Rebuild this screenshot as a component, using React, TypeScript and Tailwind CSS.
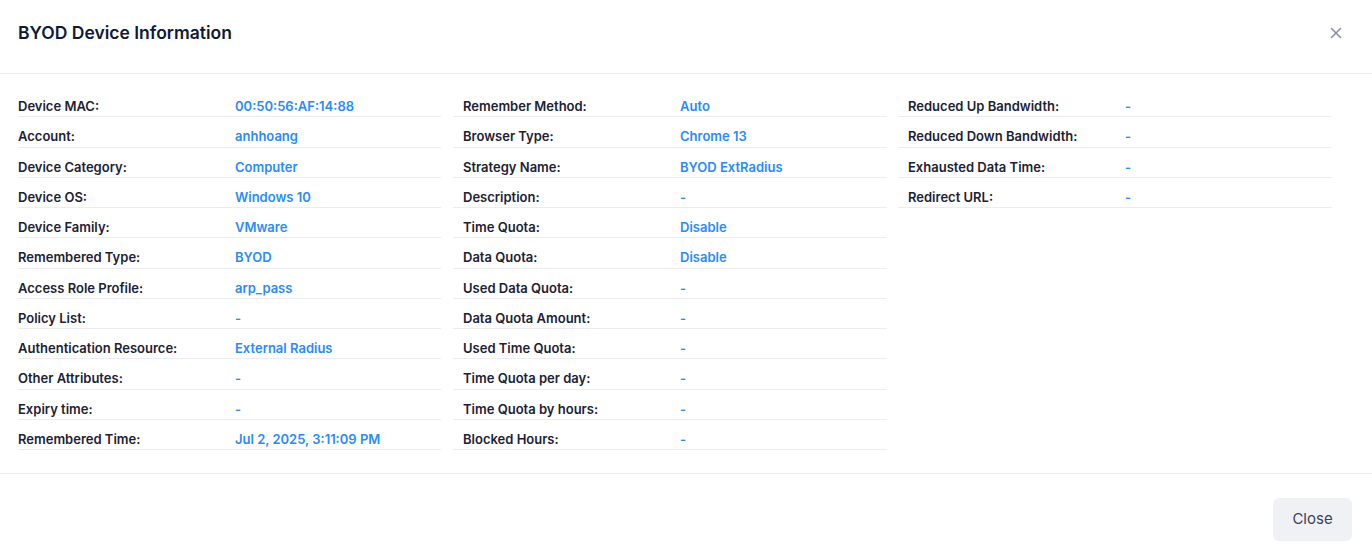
import React from "react";

type Item = [string, string];

const col1: Item[] = [
  ["Device MAC:", "00:50:56:AF:14:88"],
  ["Account:", "anhhoang"],
  ["Device Category:", "Computer"],
  ["Device OS:", "Windows 10"],
  ["Device Family:", "VMware"],
  ["Remembered Type:", "BYOD"],
  ["Access Role Profile:", "arp_pass"],
  ["Policy List:", "-"],
  ["Authentication Resource:", "External Radius"],
  ["Other Attributes:", "-"],
  ["Expiry time:", "-"],
  ["Remembered Time:", "Jul 2, 2025, 3:11:09 PM"],
];

const col2: Item[] = [
  ["Remember Method:", "Auto"],
  ["Browser Type:", "Chrome 13"],
  ["Strategy Name:", "BYOD ExtRadius"],
  ["Description:", "-"],
  ["Time Quota:", "Disable"],
  ["Data Quota:", "Disable"],
  ["Used Data Quota:", "-"],
  ["Data Quota Amount:", "-"],
  ["Used Time Quota:", "-"],
  ["Time Quota per day:", "-"],
  ["Time Quota by hours:", "-"],
  ["Blocked Hours:", "-"],
];

const col3: Item[] = [
  ["Reduced Up Bandwidth:", "-"],
  ["Reduced Down Bandwidth:", "-"],
  ["Exhausted Data Time:", "-"],
  ["Redirect URL:", "-"],
];

function Column({ items, width, pad }: { items: Item[]; width: string; pad: boolean }) {
  return (
    <div className={`${width} flex flex-col`}>
      {items.map(([k, v]) => (
        <div
          key={k}
          className={`h-[30.25px] box-border pt-[10px] border-b border-[#ededf1] flex text-[13px] leading-[18px] font-semibold ${pad ? "pl-[10px]" : ""}`}
        >
          <div className="w-[217px] shrink-0 text-[#1c2233]">{k}</div>
          <div className="text-[#2a8bfb]">{v}</div>
        </div>
      ))}
    </div>
  );
}

export default function App() {
  return (
    <div
      className="w-[1372px] h-[560px] bg-white flex flex-col"
      style={{ fontFamily: "Inter, 'Noto Sans', sans-serif" }}
    >
      <div className="h-[74px] border-b border-[#ececf0] flex items-center justify-between pl-[18px] pr-[30px] shrink-0">
        <h1 className="text-[17.5px] font-semibold text-[#0f1a33] leading-[24px] -mt-[8px]">
          BYOD Device Information
        </h1>
        <svg width="12" height="12" viewBox="0 0 12 12" className="-mt-[8px]">
          <path d="M1.5 1.5 L10.5 10.5 M10.5 1.5 L1.5 10.5" stroke="#868ca6" strokeWidth="1.5" strokeLinecap="round" />
        </svg>
      </div>
      <div className="pl-[18px] pt-[13px] pb-[23px] border-b border-[#ececf0] flex gap-[12px]">
        <Column items={col1} width="w-[423px]" pad={false} />
        <div className="flex gap-[11px]">
          <Column items={col2} width="w-[434px]" pad={true} />
          <Column items={col3} width="w-[434px]" pad={true} />
        </div>
      </div>
      <div className="flex justify-end pr-[20px] pt-[24px]">
        <button className="w-[79px] h-[43px] rounded-[6px] bg-[#f0f1f4] text-[15px] text-[#3b4157] font-normal">
          Close
        </button>
      </div>
    </div>
  );
}
